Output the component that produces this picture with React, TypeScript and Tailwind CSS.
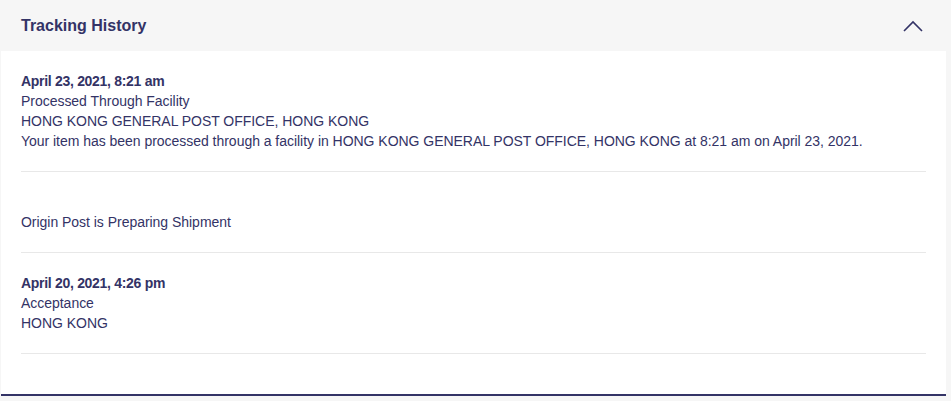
const events = [
  {
    date: "April 23, 2021, 8:21 am",
    lines: [
      "Processed Through Facility",
      "HONG KONG GENERAL POST OFFICE, HONG KONG",
      "Your item has been processed through a facility in HONG KONG GENERAL POST OFFICE, HONG KONG at 8:21 am on April 23, 2021.",
    ],
  },
  { date: "", lines: ["Origin Post is Preparing Shipment"] },
  { date: "April 20, 2021, 4:26 pm", lines: ["Acceptance", "HONG KONG"] },
];

export default function App() {
  return (
    <div className="min-h-[401px] bg-[#f6f6f6] font-['Liberation_Sans',Arial,sans-serif] text-[#333366]">
      <div className="h-[51px] flex items-center justify-between pl-[21px] pr-[28px]">
        <h2 className="text-base font-bold">Tracking History</h2>
        <svg width="20" height="12" viewBox="0 0 20 12" fill="none">
          <path d="M1 11 L10 2 L19 11" stroke="#333366" strokeWidth="1.6" />
        </svg>
      </div>
      <div className="ml-px w-[945px] bg-white border-b-2 border-[#333366] px-5 pb-10">
        {events.map((e, i) => (
          <div key={i} className="py-5 border-b border-[#e8e8e8] text-sm leading-5 tracking-[-0.03px]">
            <div className="h-5 font-bold tracking-[-0.3px]">{e.date}</div>
            {e.lines.map((l, j) => (
              <div key={j}>{l}</div>
            ))}
          </div>
        ))}
      </div>
    </div>
  );
}
